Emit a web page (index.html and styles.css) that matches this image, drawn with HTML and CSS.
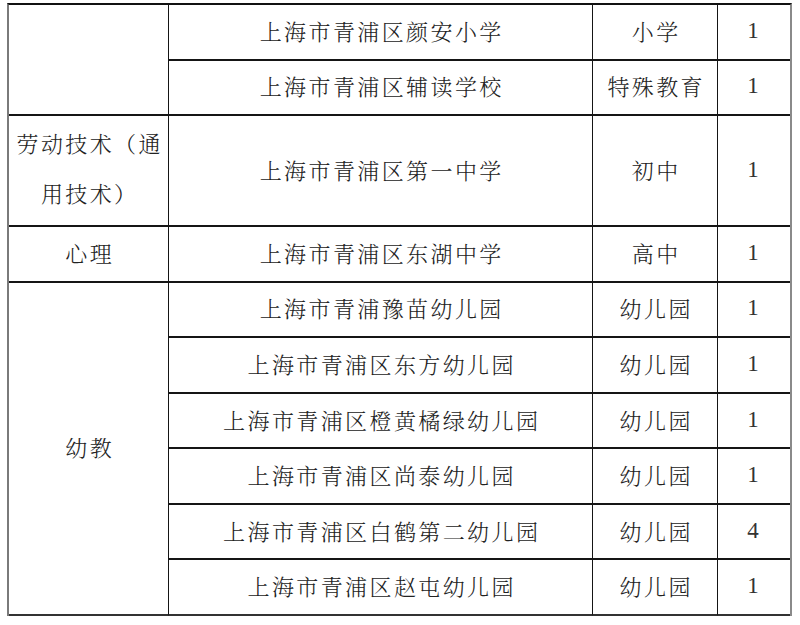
FILE: index.html
```html
<!DOCTYPE html>
<html lang="zh-CN">
<head>
<meta charset="utf-8">
<title>岗位表</title>
<link rel="stylesheet" href="styles.css">
</head>
<body>
<div class="sheet">
  <div class="cell subj span2"></div>
  <div class="cell school">上海市青浦区颜安小学</div>
  <div class="cell level">小学</div>
  <div class="cell num">1</div>

  <div class="cell school">上海市青浦区辅读学校</div>
  <div class="cell level">特殊教育</div>
  <div class="cell num">1</div>

  <div class="cell subj span2 two"><span>劳动技术（通</span><span>用技术）</span></div>
  <div class="cell school span2">上海市青浦区第一中学</div>
  <div class="cell level span2">初中</div>
  <div class="cell num span2">1</div>

  <div class="cell subj">心理</div>
  <div class="cell school">上海市青浦区东湖中学</div>
  <div class="cell level">高中</div>
  <div class="cell num">1</div>

  <div class="cell subj span6 last">幼教</div>
  <div class="cell school">上海市青浦豫苗幼儿园</div>
  <div class="cell level">幼儿园</div>
  <div class="cell num">1</div>

  <div class="cell school">上海市青浦区东方幼儿园</div>
  <div class="cell level">幼儿园</div>
  <div class="cell num">1</div>

  <div class="cell school">上海市青浦区橙黄橘绿幼儿园</div>
  <div class="cell level">幼儿园</div>
  <div class="cell num">1</div>

  <div class="cell school">上海市青浦区尚泰幼儿园</div>
  <div class="cell level">幼儿园</div>
  <div class="cell num">1</div>

  <div class="cell school">上海市青浦区白鹤第二幼儿园</div>
  <div class="cell level">幼儿园</div>
  <div class="cell num">4</div>

  <div class="cell school last">上海市青浦区赵屯幼儿园</div>
  <div class="cell level last">幼儿园</div>
  <div class="cell num last">1</div>
</div>
</body>
</html>
```
FILE: styles.css
```css
* { box-sizing: border-box; }
html, body {
  margin: 0;
  padding: 0;
  background: #ffffff;
}
body {
  padding: 3px 0 0 7px;
  font-family: "Noto Serif CJK SC", "Liberation Serif", "Noto Sans CJK SC", serif;
  color: #222222;
}
.sheet {
  width: 785px;
  height: 613px;
  display: grid;
  grid-template-columns: 160px 424px 125px 72px;
  grid-template-rows: repeat(11, 1fr);
  grid-auto-flow: row dense;
  border-top: 2px solid #111;
  border-left: 2px solid #7a7a7a;
  border-right: 2px solid #8a8a8a;
}
.cell {
  display: flex;
  align-items: center;
  justify-content: center;
  border-bottom: 2px solid #151515;
  border-right: 1px solid #151515;
  font-size: 22px;
  letter-spacing: 2.4px;
  padding: 0 0 3px 2.4px;
  white-space: nowrap;
  font-weight: 300;
}
.subj { grid-column: 1; }
.school { grid-column: 2; }
.level { grid-column: 3; }
.num {
  grid-column: 4;
  border-right: none;
  font-family: "Liberation Serif", serif;
  letter-spacing: 0;
  padding: 0 2px 2px 0;
  font-size: 23px;
  color: #333333;
}
.span2 { grid-row: span 2; }
.span6 { grid-row: span 6; }
.last { border-bottom-color: #333; }
.two {
  flex-direction: column;
  gap: 4px;
  line-height: 46px;
  padding-bottom: 6px;
}
```
